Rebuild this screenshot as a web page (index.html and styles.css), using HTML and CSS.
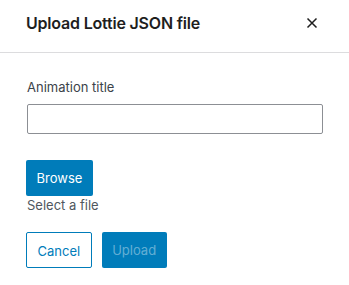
FILE: index.html
```html
<!DOCTYPE html>
<html lang="en">
<head>
    <meta charset="UTF-8">
    <meta name="viewport" content="width=device-width, initial-scale=1.0">
    <title>Upload Lottie JSON file</title>
    <link rel="stylesheet" href="styles.css">
</head>
<body>
    <div class="modal">
        <div class="modal-header">
            <h1 class="modal-title">Upload Lottie JSON file</h1>
            <button class="close-btn" aria-label="Close">
                <svg width="12" height="12" viewBox="0 0 12 12">
                    <path d="M1.5 1.5L10.5 10.5M10.5 1.5L1.5 10.5" stroke="#1e1e1e" stroke-width="1.5" fill="none"/>
                </svg>
            </button>
        </div>
        <div class="modal-body">
            <label class="field-label" for="anim-title">Animation title</label>
            <input class="text-input" id="anim-title" type="text">

            <div class="file-picker">
                <button class="btn btn-primary">Browse</button>
                <span class="file-name">Select a file</span>
            </div>

            <div class="actions">
                <button class="btn btn-secondary">Cancel</button>
                <button class="btn btn-primary" disabled>Upload</button>
            </div>
        </div>
    </div>
</body>
</html>
```

FILE: styles.css
```css
* {
    box-sizing: border-box;
}

body {
    margin: 0;
    background-color: #fff;
    font-family: Inter, "Noto Sans", sans-serif;
    color: #1e1e1e;
}

.modal {
    width: 349px;
    height: 285px;
    background-color: #fff;
}

.modal-header {
    height: 53px;
    padding: 0 26px;
    border-bottom: 1px solid #dcdcde;
    display: flex;
    align-items: center;
    justify-content: space-between;
}

.modal-title {
    margin: 0 0 6px 0;
    font-size: 16px;
    font-weight: 600;
    line-height: 20px;
    letter-spacing: -0.2px;
    color: #1e1e1e;
}

.close-btn {
    width: 24px;
    height: 24px;
    padding: 0;
    margin: 0 -1px 6px 0;
    border: none;
    background: none;
    display: flex;
    align-items: center;
    justify-content: center;
}

.modal-body {
    padding: 25px 26px 0 26px;
    display: flex;
    flex-direction: column;
    align-items: flex-start;
}

.field-label {
    font-size: 13px;
    line-height: 18px;
    color: #3c434a;
    margin-left: 1px;
}

.text-input {
    width: 296px;
    height: 30px;
    margin: 8px 0 0 1px;
    border: 1px solid #8c8f94;
    border-radius: 2px;
    font-family: inherit;
    font-size: 13px;
}

.file-picker {
    margin-top: 26px;
    display: flex;
    flex-direction: column;
    align-items: flex-start;
}

.file-name {
    font-size: 13px;
    line-height: 18px;
    color: #50575e;
    margin-left: 1px;
}

.actions {
    margin-top: 18px;
    display: flex;
    gap: 10px;
}

.btn {
    height: 36px;
    padding: 0 10.5px;
    border-radius: 2px;
    font-family: inherit;
    font-size: 13px;
    line-height: 36px;
    cursor: pointer;
}

.btn-primary {
    background-color: #007cba;
    border: none;
    color: #fff;
}

.btn-primary:disabled {
    color: rgba(255, 255, 255, 0.4);
    cursor: default;
}

.btn-secondary {
    background-color: #fff;
    border: 1px solid #007cba;
    color: #007cba;
}
```
